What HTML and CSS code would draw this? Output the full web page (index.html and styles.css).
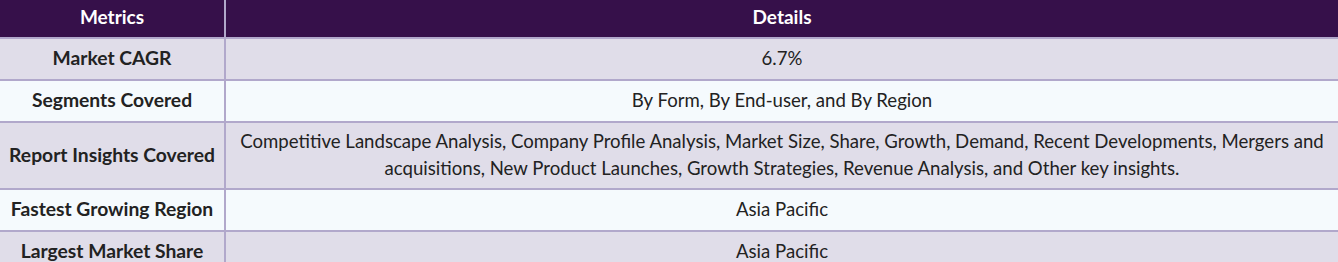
FILE: index.html
```html
<!DOCTYPE html>
<html>
<head>
<meta charset="utf-8">
<link rel="stylesheet" href="styles.css">
</head>
<body>
<table class="report">
  <colgroup><col class="c1"><col class="c2"></colgroup>
  <thead>
    <tr><th>Metrics</th><th>Details</th></tr>
  </thead>
  <tbody>
    <tr class="odd"><td class="k">Market CAGR</td><td>6.7%</td></tr>
    <tr class="even"><td class="k">Segments Covered</td><td>By Form, By End-user, and By Region</td></tr>
    <tr class="odd"><td class="k">Report Insights Covered</td><td>Competitive Landscape Analysis, Company Profile Analysis, Market Size, Share, Growth, Demand, Recent Developments, Mergers and acquisitions, New Product Launches, Growth Strategies, Revenue Analysis, and Other key insights.</td></tr>
    <tr class="even"><td class="k">Fastest Growing Region</td><td>Asia Pacific</td></tr>
    <tr class="odd"><td class="k">Largest Market Share</td><td>Asia Pacific</td></tr>
  </tbody>
</table>
</body>
</html>
```

FILE: styles.css
```css
html, body {
  margin: 0;
  padding: 0;
  background: #ffffff;
}
.report {
  width: 1338px;
  border-collapse: collapse;
  table-layout: fixed;
  font-family: Lato, "Noto Sans", sans-serif;
  font-size: 18.6px;
  line-height: 26.4px;
  color: #222222;
}
.c1 { width: 225px; }
.report th,
.report td {
  border: 2px solid #b1a8cb;
  padding: 5px 4px 7px;
  text-align: center;
  vertical-align: middle;
}
.report tr > :first-child { border-left: none; }
.report tr > :last-child { border-right: none; }
.report thead tr > * { border-top: none; }
.report th {
  background: #36104a;
  color: #ffffff;
  font-weight: 700;
  font-size: 19px;
  height: 23px;
  padding: 4px 4px 7px;
}
.report td { height: 28px; }
.report .k { font-weight: 700; font-size: 19.3px; }
.odd { background: #e0dde9; }
.even { background: #f5fafd; }
```
